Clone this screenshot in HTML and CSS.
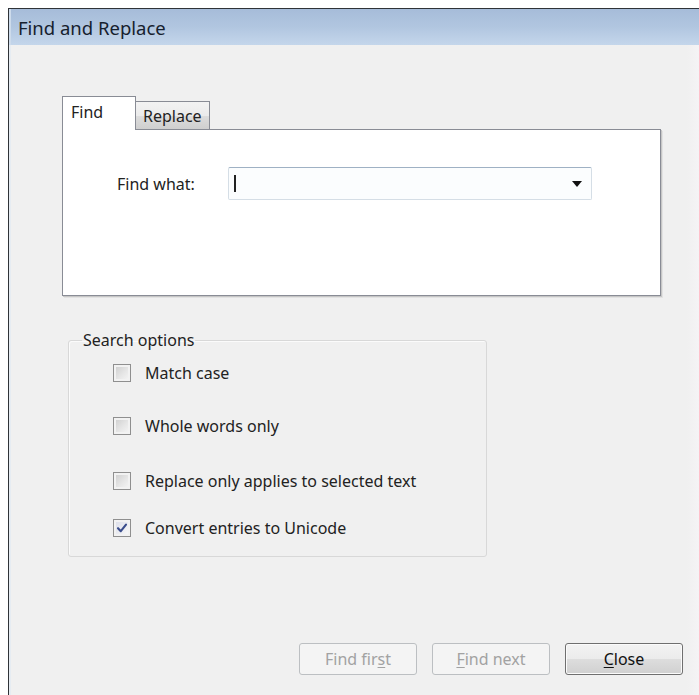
FILE: index.html
```html
<!DOCTYPE html>
<html lang="en">
<head>
<meta charset="utf-8">
<title>Find and Replace</title>
<link rel="stylesheet" href="styles.css">
</head>
<body>
<div class="window">
  <div class="titlebar">Find and Replace</div>
  <div class="content">
    <div class="tabs">
      <div class="tab tab-active">Find</div>
      <div class="tab">Replace</div>
    </div>
    <div class="panel">
      <div class="field-row">
        <label class="field-label">Find what:</label>
        <div class="combo">
          <span class="caret"></span>
          <svg class="combo-arrow" width="10" height="6" viewBox="0 0 10 6"><path d="M0 0H10L5 6Z" fill="#111"/></svg>
        </div>
      </div>
    </div>

    <fieldset class="group">
      <legend class="group-title">Search options</legend>
      <div class="option opt-1"><span class="check"></span><span>Match case</span></div>
      <div class="option opt-2"><span class="check"></span><span>Whole words only</span></div>
      <div class="option opt-3"><span class="check"></span><span>Replace only applies to selected text</span></div>
      <div class="option opt-4"><span class="check checked"><svg width="12" height="12" viewBox="0 0 12 12"><path d="M2 6.2 L4.8 9.2 L10 2.6" fill="none" stroke="#3a4d8c" stroke-width="2.1" stroke-linecap="round" stroke-linejoin="round"/></svg></span><span>Convert entries to Unicode</span></div>
    </fieldset>

    <div class="buttons">
      <button class="btn" disabled>Find fir<u>s</u>t</button>
      <button class="btn" disabled><u>F</u>ind next</button>
      <button class="btn btn-default"><u>C</u>lose</button>
    </div>
  </div>
</div>
</body>
</html>
```

FILE: styles.css
```css
html, body {
  margin: 0;
  padding: 0;
  background: #ffffff;
}

body {
  font-family: "Noto Sans", "Open Sans", sans-serif;
  font-size: 16px;
  color: #222222;
  overflow: hidden;
}

.window {
  margin: 8px 0 0 8px;
  height: 687px;
  border-top: 1px solid #2f3338;
  border-left: 1px solid #2f3338;
  display: flex;
  flex-direction: column;
  box-sizing: border-box;
}

.titlebar {
  height: 36px;
  box-sizing: border-box;
  padding: 8px 0 0 7px;
  font-size: 18.5px;
  line-height: 22px;
  color: #16202e;
  background: linear-gradient(to bottom, #a6bcd9 0%, #b1c6e0 50%, #c4d6eb 100%);
  border-left: 2px solid #cddbeb;
}

.content {
  flex: 1;
  display: flex;
  flex-direction: column;
  padding: 51px 16px 20px 51px;
  background: linear-gradient(to right, #f0f0f0 calc(100% - 12px), #f5f3f5);
  border-left: 2px solid #e6ecf2;
}

/* tab strip */
.tabs {
  display: flex;
  align-items: flex-end;
  height: 33px;
}

.tab {
  height: 28px;
  box-sizing: border-box;
  padding: 2px 7px 0 7px;
  border: 1px solid #898c95;
  border-bottom: none;
  border-left: none;
  background: linear-gradient(to bottom, #f3f3f3 0%, #ebebeb 50%, #dddddd 51%, #cfcfcf 100%);
  line-height: 24px;
}

.tab-active {
  position: relative;
  z-index: 1;
  height: 34px;
  margin-bottom: -1px;
  width: 74px;
  padding: 3px 0 0 8px;
  border-left: 1px solid #898c95;
  background: #ffffff;
}

.panel {
  width: 599px;
  height: 167px;
  box-sizing: border-box;
  background: #ffffff;
  border: 1px solid #898c95;
  box-shadow: 1px 1px 0 #c6c6c6, 2px 2px 0 #e2e2e2;
  padding: 37px 0 0 54px;
}

.field-row {
  display: flex;
  align-items: center;
}

.field-label {
  width: 111px;
}

.combo {
  width: 364px;
  height: 33px;
  box-sizing: border-box;
  border: 1px solid #d5dee6;
  border-top-color: #9fb1c4;
  border-radius: 2px;
  background: #fbfdfe;
  display: flex;
  align-items: center;
  justify-content: space-between;
  padding: 0 9px 0 5px;
}

.caret {
  width: 1.5px;
  height: 17px;
  background: #222;
}

.combo-arrow {
  display: block;
}

/* search options group */
.group {
  margin: 34px 0 0 6px;
  width: 419px;
  height: 227px;
  box-sizing: border-box;
  border: 1px solid #d8d8d8;
  border-radius: 3px;
  box-shadow: inset 1px 1px 0 #fbfbfb;
  padding: 0 0 0 44px;
  display: flex;
  flex-direction: column;
}

.group-title {
  margin-left: -31px;
  padding: 0 1px;
  line-height: 20px;
}

.option {
  display: flex;
  align-items: center;
  height: 18px;
  gap: 14px;
}

.opt-1 { margin-top: 14px; }
.opt-2 { margin-top: 35px; }
.opt-3 { margin-top: 37px; }
.opt-4 { margin-top: 29px; }

.check {
  width: 18px;
  height: 18px;
  box-sizing: border-box;
  border: 1px solid #8f8f8f;
  background: linear-gradient(135deg, #cbcbcb 0%, #e6e6e6 55%, #f7f7f7 100%);
  box-shadow: inset 0 0 0 2px #f2f2f2;
  display: flex;
  align-items: center;
  justify-content: center;
  flex: none;
}

.check.checked {
  background: linear-gradient(135deg, #dadce8 0%, #eeeff3 65%, #fbfbfb 100%);
}

/* dialog buttons */
.buttons {
  margin-top: auto;
  display: flex;
  justify-content: flex-end;
  gap: 15px;
}

.btn {
  width: 118px;
  height: 32px;
  box-sizing: border-box;
  font-family: inherit;
  font-size: 16px;
  color: #a2a2a2;
  border: 1px solid #bcbfc2;
  border-radius: 3px;
  background: #f4f4f4;
  padding: 0;
}

.btn u {
  text-underline-offset: 2px;
}

.btn-default {
  color: #111;
  border-color: #6f6f6f;
  background: linear-gradient(to bottom, #f3f3f3 0%, #ebebeb 50%, #dddddd 51%, #d0d0d0 100%);
  box-shadow: inset 0 0 0 1px #fbfbfb;
}
```
